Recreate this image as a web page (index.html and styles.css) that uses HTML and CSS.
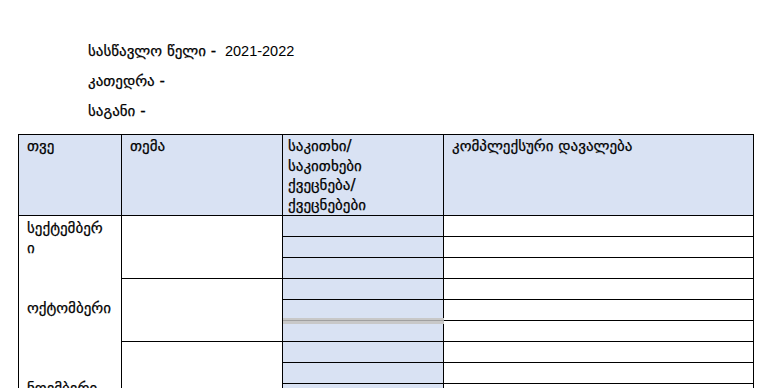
FILE: index.html
```html
<!DOCTYPE html>
<html lang="ka">
<head>
<meta charset="utf-8">
<title>სასწავლო წელი</title>
<link rel="stylesheet" href="styles.css">
</head>
<body>
<div class="meta">
  <p class="meta-line">სასწავლო წელი - <span class="num">2021-2022</span></p>
  <p class="meta-line">კათედრა -</p>
  <p class="meta-line">საგანი -</p>
</div>
<table class="plan">
  <colgroup>
    <col class="c-month"><col class="c-theme"><col class="c-issue"><col class="c-task">
  </colgroup>
  <thead>
    <tr class="head">
      <th>თვე</th>
      <th>თემა</th>
      <th>საკითხი/<br>საკითხები<br>ქვეცნება/<br>ქვეცნებები</th>
      <th>კომპლექსური დავალება</th>
    </tr>
  </thead>
  <tbody>
    <tr>
      <td class="month" rowspan="9">
        <p class="m m1">სექტემბერ<br>ი</p>
        <p class="m m2">ოქტომბერი</p>
        <p class="m m3">ნოემბერი</p>
      </td>
      <td class="theme" rowspan="3"></td>
      <td class="issue"></td><td class="task"></td>
    </tr>
    <tr><td class="issue"></td><td class="task"></td></tr>
    <tr><td class="issue"></td><td class="task"></td></tr>
    <tr><td class="theme" rowspan="3"></td><td class="issue"></td><td class="task"></td></tr>
    <tr><td class="issue brk"></td><td class="task"></td></tr>
    <tr><td class="issue"></td><td class="task"></td></tr>
    <tr><td class="theme" rowspan="3"></td><td class="issue"></td><td class="task"></td></tr>
    <tr><td class="issue"></td><td class="task"></td></tr>
    <tr><td class="issue"></td><td class="task"></td></tr>
  </tbody>
</table>
</body>
</html>
```
FILE: styles.css
```css
html, body {
  margin: 0;
  padding: 0;
  background: #ffffff;
}
body {
  font-family: "DejaVu Sans", sans-serif;
  font-size: 15px;
  color: #000;
  overflow: hidden;
  height: 388px;
  -webkit-text-stroke: 0.25px #000;
}
.meta {
  padding: 41px 0 0 88px;
  display: flex;
  flex-direction: column;
  gap: 10px;
}
.meta-line {
  margin: 0;
  height: 20px;
  line-height: 20px;
  white-space: nowrap;
}
.num {
  font-family: "Liberation Sans", sans-serif;
  font-size: 14.5px;
  margin-left: 4px;
  -webkit-text-stroke: 0;
}
.plan {
  margin: 13px 0 0 18px;
  border-collapse: collapse;
  table-layout: fixed;
  width: 735px;
}
.c-month { width: 103px; }
.c-theme { width: 161px; }
.c-issue { width: 161px; }
.c-task { width: 310px; }
.plan th, .plan td {
  border: 1px solid #000;
  padding: 0;
  vertical-align: top;
}
.head th {
  background: #d9e2f3;
  font-weight: normal;
  text-align: left;
  height: 81px;
  padding: 2px 6px 0 8px;
  line-height: 19.5px;
  box-sizing: border-box;
}
.head th:nth-child(3) { padding-left: 5px; }
.plan td.issue, .plan td.task { height: 20px; }
.issue { background: #d9e2f3; }
.task { background: #fff; }
.theme { background: #fff; }
.month {
  background: #fff;
  padding: 2px 0 0 8px !important;
}
.m {
  margin: 0;
  line-height: 20px;
  white-space: nowrap;
}
.m2 { margin-top: 40px; }
.m3 { margin-top: 60px; }
.brk { position: relative; }
.brk::after {
  content: "";
  position: absolute;
  left: 0;
  right: -1px;
  bottom: -4px;
  height: 6px;
  background: #c8c8c8;
}
.brk::before {
  content: "";
  position: absolute;
  left: 0;
  right: -1px;
  bottom: -1px;
  height: 1px;
  background: #a0a0a0;
  z-index: 1;
}
```
